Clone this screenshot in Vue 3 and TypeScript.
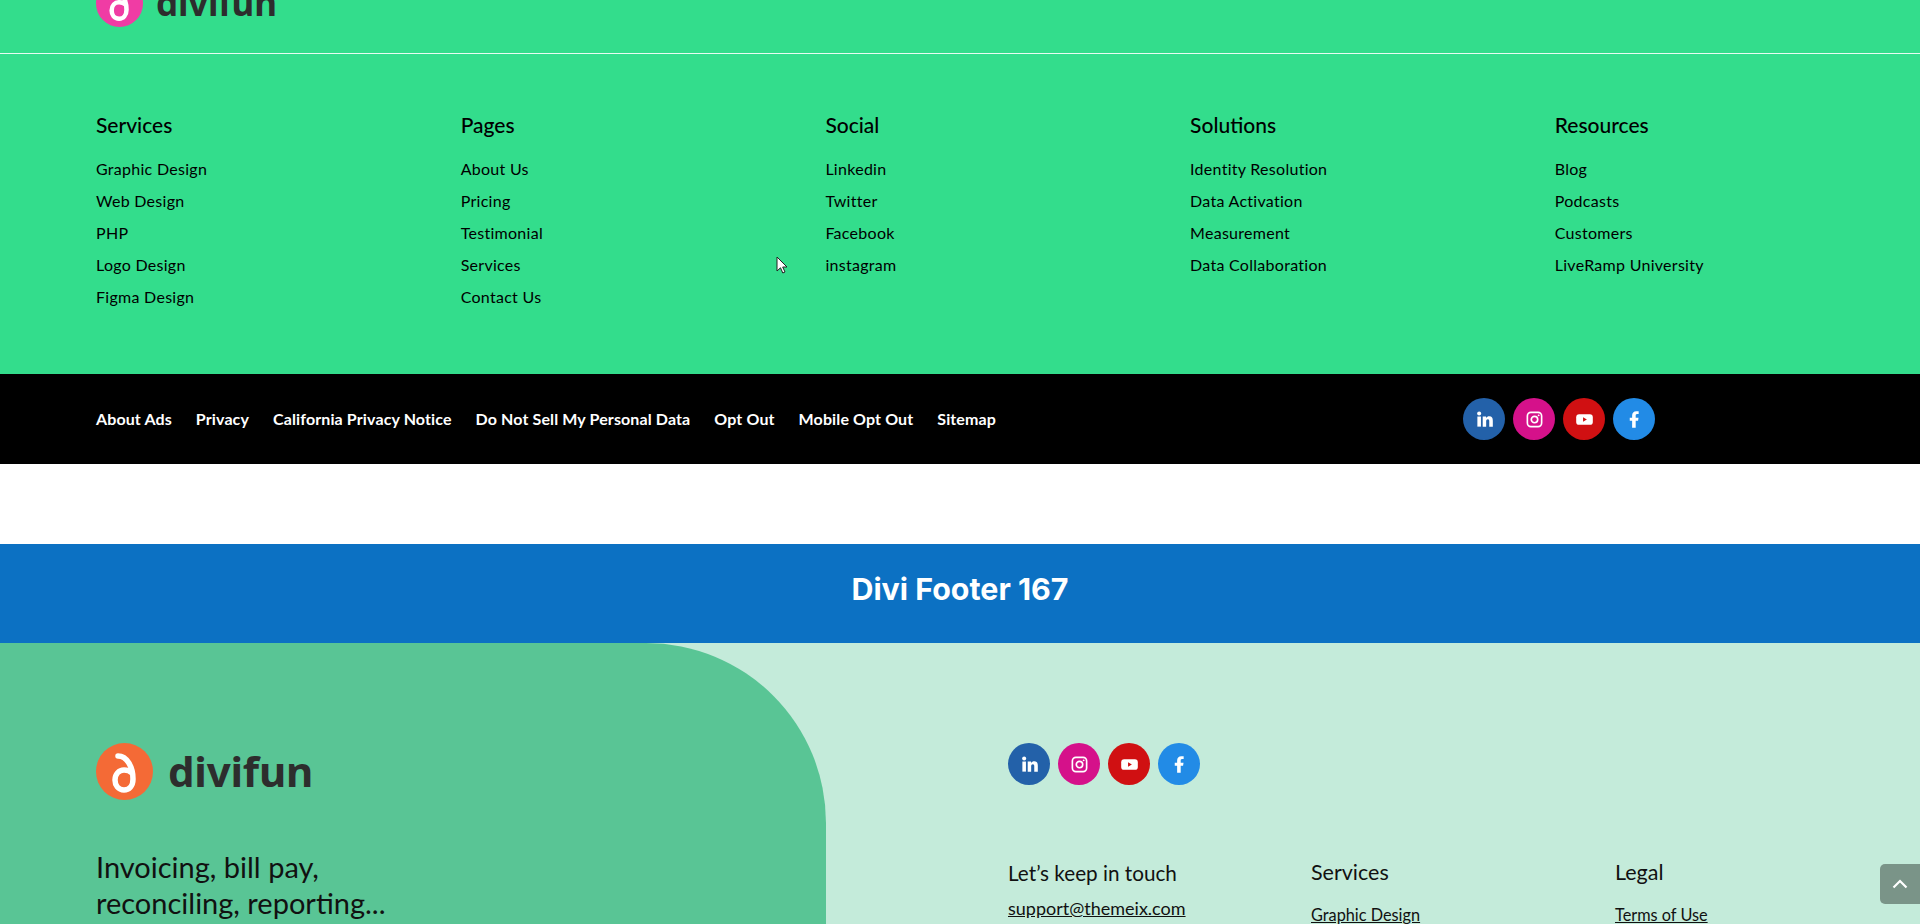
<script setup lang="ts">
interface Col { title: string; links: string[] }
const cols: Col[] = [
  { title: 'Services', links: ['Graphic Design', 'Web Design', 'PHP', 'Logo Design', 'Figma Design'] },
  { title: 'Pages', links: ['About Us', 'Pricing', 'Testimonial', 'Services', 'Contact Us'] },
  { title: 'Social', links: ['Linkedin', 'Twitter', 'Facebook', 'instagram'] },
  { title: 'Solutions', links: ['Identity Resolution', 'Data Activation', 'Measurement', 'Data Collaboration'] },
  { title: 'Resources', links: ['Blog', 'Podcasts', 'Customers', 'LiveRamp University'] },
]
const legal: string[] = ['About Ads', 'Privacy', 'California Privacy Notice', 'Do Not Sell My Personal Data', 'Opt Out', 'Mobile Opt Out', 'Sitemap']
const socials: string[] = ['in', 'ig', 'yt', 'fb']
</script>

<template>
  <div class="page">
    <header class="top">
      <div class="logo logo-small">
        <svg class="mark" viewBox="0 0 57 57" aria-hidden="true">
          <circle cx="28.500" cy="28.500" r="28.500" fill="#f03ca4" />
          <path d="M22 13C31 13 37 24 37 36 37 43 33 47 28 47 22 47 19 42 19 37 19 31 23 27 28 27 31 27 34 28 36 30" fill="none" stroke="#fff" stroke-width="5.500" stroke-linecap="round" />
        </svg>
        <span class="word">divifun</span>
      </div>
    </header>

    <section class="links">
      <div v-for="col in cols" :key="col.title" class="col">
        <h4>{{ col.title }}</h4>
        <a v-for="l in col.links" :key="l">{{ l }}</a>
      </div>
    </section>

    <section class="black">
      <nav class="legal"><a v-for="l in legal" :key="l">{{ l }}</a></nav>
      <div class="socials">
        <span v-for="s in socials" :key="s" :class="['soc', s]">
          <svg viewBox="0 0 16 16" aria-hidden="true">
            <template v-if="s === 'in'">
              <rect x="2" y="5.500" width="3" height="8.500" fill="#fff" />
              <circle cx="3.500" cy="3" r="1.700" fill="#fff" />
              <path d="M6.500 5.500h2.800v1.200c.6-.9 1.600-1.400 2.700-1.400 2.300 0 3 1.500 3 3.700V14h-3V9.500c0-1-.3-1.700-1.200-1.700s-1.400.7-1.400 1.700V14H6.500z" fill="#fff" />
            </template>
            <template v-else-if="s === 'ig'">
              <rect x="2" y="2" width="12" height="12" rx="3" fill="none" stroke="#fff" stroke-width="1.400" />
              <circle cx="8" cy="8" r="2.700" fill="none" stroke="#fff" stroke-width="1.400" />
              <circle cx="11.500" cy="4.500" r=".8" fill="#fff" />
            </template>
            <template v-else-if="s === 'yt'">
              <rect x="1" y="3.500" width="14" height="9" rx="2.500" fill="#fff" />
              <path d="M6.800 6.200 10 8l-3.200 1.800z" fill="#d01012" />
            </template>
            <template v-else>
              <path d="M6 15V9H4V6.500h2V4.700C6 2.500 7.300 1 9.500 1c1 0 1.800.1 2 .1v2.300h-1.300C9.100 3.400 9 4 9 4.800v1.700h2.400L11 9H9v6z" fill="#fff" />
            </template>
          </svg>
        </span>
      </div>
    </section>

    <div class="gap"></div>

    <section class="banner"><h2>Divi Footer 167</h2></section>

    <section class="bottom">
      <div class="left">
        <div class="logo logo-big">
          <svg class="mark" viewBox="0 0 57 57" aria-hidden="true">
            <circle cx="28.500" cy="28.500" r="28.500" fill="#f46a36" />
            <path d="M22 13C31 13 37 24 37 36 37 43 33 47 28 47 22 47 19 42 19 37 19 31 23 27 28 27 31 27 34 28 36 30" fill="none" stroke="#fff" stroke-width="5.500" stroke-linecap="round" />
          </svg>
          <span class="word">divifun</span>
        </div>
        <p class="tag">Invoicing, bill pay,<br />reconciling, reporting...</p>
      </div>
      <div class="right">
        <div class="socials">
          <span v-for="s in socials" :key="s" :class="['soc', s]">
            <svg viewBox="0 0 16 16" aria-hidden="true">
              <template v-if="s === 'in'">
                <rect x="2" y="5.500" width="3" height="8.500" fill="#fff" />
                <circle cx="3.500" cy="3" r="1.700" fill="#fff" />
                <path d="M6.500 5.500h2.800v1.200c.6-.9 1.600-1.400 2.700-1.400 2.300 0 3 1.500 3 3.700V14h-3V9.500c0-1-.3-1.700-1.200-1.700s-1.400.7-1.400 1.700V14H6.500z" fill="#fff" />
              </template>
              <template v-else-if="s === 'ig'">
                <rect x="2" y="2" width="12" height="12" rx="3" fill="none" stroke="#fff" stroke-width="1.400" />
                <circle cx="8" cy="8" r="2.700" fill="none" stroke="#fff" stroke-width="1.400" />
                <circle cx="11.500" cy="4.500" r=".8" fill="#fff" />
              </template>
              <template v-else-if="s === 'yt'">
                <rect x="1" y="3.500" width="14" height="9" rx="2.500" fill="#fff" />
                <path d="M6.800 6.200 10 8l-3.200 1.800z" fill="#d01012" />
              </template>
              <template v-else>
                <path d="M6 15V9H4V6.500h2V4.700C6 2.500 7.300 1 9.500 1c1 0 1.800.1 2 .1v2.300h-1.300C9.100 3.400 9 4 9 4.800v1.700h2.400L11 9H9v6z" fill="#fff" />
              </template>
            </svg>
          </span>
        </div>
        <div class="cols3">
          <div class="c3 touch">
            <h5>Let’s keep in touch</h5>
            <a>support@themeix.com</a>
          </div>
          <div class="c3 plain">
            <h5>Services</h5>
            <a>Graphic Design</a>
          </div>
          <div class="c3 plain">
            <h5>Legal</h5>
            <a>Terms of Use</a>
          </div>
        </div>
      </div>
    </section>

    <svg class="cursor" viewBox="0 0 12 19" aria-hidden="true">
      <path d="M1 1v14l3.500-3.200 2.300 5.200 2.200-1-2.300-5H11z" fill="#fff" stroke="#222" stroke-width="1" />
    </svg>
    <div class="totop">
      <svg viewBox="0 0 16 10" aria-hidden="true"><path d="M1.500 8.500 8 2l6.500 6.500" fill="none" stroke="#fff" stroke-width="2.200" /></svg>
    </div>
  </div>
</template>

<style>
html, body { margin: 0; overflow: hidden; }
</style>

<style scoped>
.page { position: relative; width: 1920px; height: 924px; overflow: hidden; display: flex; flex-direction: column; font-family: Lato, "Noto Sans", sans-serif; color: #000; }
.top { height: 53px; background: #33dd8c; border-bottom: 1px solid #e9fbf2; overflow: hidden; }
.logo { display: flex; align-items: center; }
.logo-small { padding-left: 96px; margin-top: -20px; gap: 13px; }
.logo-small .mark { width: 47px; height: 47px; flex: none; }
.logo-small .word { font-size: 35px; line-height: 47px; margin-top: -3px; }
.word { font-family: "Noto Sans", sans-serif; font-weight: 700; color: #2d2d2d; letter-spacing: -.2px; }
.links { height: 320px; background: #33dd8c; padding: 55px 0 0 96px; box-sizing: border-box; display: flex; }
.col { width: 364.700px; display: flex; flex-direction: column; }
.col h4 { margin: 0 0 13px; font-size: 21px; line-height: 31px; font-weight: 500; }
.col a { font-size: 16px; line-height: 32px; letter-spacing: .28px; }
.black { height: 90px; background: #000; display: flex; align-items: center; padding-left: 96px; }
.legal { display: flex; gap: 24px; width: 1367px; }
.legal a { color: #fff; font-size: 16px; font-weight: 700; line-height: 24px; letter-spacing: .12px; }
.socials { display: flex; gap: 8px; }
.soc { width: 42px; height: 42px; border-radius: 50%; display: flex; align-items: center; justify-content: center; }
.soc svg { width: 19px; height: 19px; }
.soc.in { background: #2361a9; }
.soc.ig { background: #d5118a; }
.soc.yt { background: #d01012; }
.soc.fb { background: #228be6; }
.gap { height: 80px; background: #fff; }
.banner { height: 99px; background: #0c71c3; display: flex; align-items: center; justify-content: center; padding-bottom: 9px; box-sizing: border-box; }
.banner h2 { margin: 0; color: #fff; font-family: Inter, sans-serif; font-weight: 700; font-size: 30.400px; line-height: 36px; }
.bottom { flex: 1; background: #c4ebda; display: flex; min-height: 0; }
.left { width: 826px; height: 400px; flex: none; background: #59c595; border-top-right-radius: 180px; box-sizing: border-box; padding: 100px 0 0 96px; }
.logo-big { gap: 15px; }
.logo-big .mark { width: 57px; height: 57px; flex: none; }
.logo-big .word { font-size: 42px; line-height: 57px; margin-top: -2px; }
.tag { margin: 49px 0 0; font-size: 29px; line-height: 36px; color: #111; }
.right { flex: 1; padding: 100px 0 0 182px; }
.cols3 { display: flex; margin-top: 72px; }
.c3 { width: 304px; display: flex; flex-direction: column; }
.touch { width: 303px; }
.c3 h5 { margin: 0; font-size: 20.700px; font-weight: 400; line-height: 30px; color: #111; }
.plain h5 { font-size: 21.500px; }
.c3 a { font-size: 16.300px; line-height: 24px; text-decoration: underline; color: #111; margin-top: 16px; }
.touch a { font-size: 18px; margin-top: 8px; }
.touch h5 { margin-top: 1px; }
.cursor { position: absolute; left: 776px; top: 256px; width: 12px; height: 19px; }
.totop { position: absolute; right: 0; top: 864px; width: 40px; height: 40px; background: #7a9488; border-radius: 5px 0 0 5px; display: flex; align-items: center; justify-content: center; }
.totop svg { width: 16px; height: 10px; }
</style>
